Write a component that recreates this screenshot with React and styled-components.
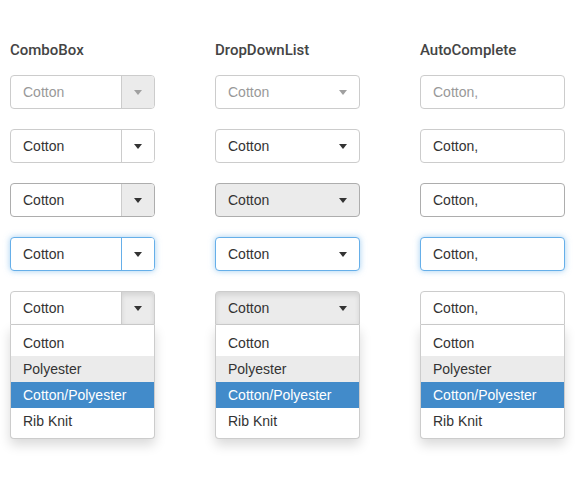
import React from 'react';
import styled, { createGlobalStyle, css } from 'styled-components';

const GlobalStyle = createGlobalStyle`
    body {
        margin: 0;
        background: #fff;
        font-family: "Liberation Sans", Arial, sans-serif;
    }
`

const items = ['Cotton', 'Polyester', 'Cotton/Polyester', 'Rib Knit'];
const states = ['disabled', 'default', 'hover', 'focus', 'open'];

const Arrow = ({ muted }) => (
    <svg width="8" height="5" viewBox="0 0 8 5">
        <path d="M0 0 L8 0 L4 5 Z" fill={muted ? '#a0a0a0' : '#333'} />
    </svg>
);

const Popup = () => (
    <List>
        {items.map((item, i) => (
            <Item key={item} $kind={i === 1 ? 'hover' : i === 2 ? 'selected' : null}>{item}</Item>
        ))}
    </List>
);

const ComboBox = ({ state }) => (
    <Holder>
        <Field $state={state}>
            <Value $muted={state === 'disabled'}>Cotton</Value>
            <Button $state={state}><Arrow muted={state === 'disabled'} /></Button>
        </Field>
        {state === 'open' && <Popup />}
    </Holder>
);

const DropDownList = ({ state }) => (
    <Holder>
        <Field $state={state} $filled={state === 'hover' || state === 'open'}>
            <Value $muted={state === 'disabled'}>Cotton</Value>
            <Select><Arrow muted={state === 'disabled'} /></Select>
        </Field>
        {state === 'open' && <Popup />}
    </Holder>
);

const AutoComplete = ({ state }) => (
    <Holder>
        <Field $state={state}>
            <Value $muted={state === 'disabled'}>Cotton,</Value>
        </Field>
        {state === 'open' && <Popup />}
    </Holder>
);

const columns = [
    { title: 'ComboBox', Widget: ComboBox },
    { title: 'DropDownList', Widget: DropDownList },
    { title: 'AutoComplete', Widget: AutoComplete },
];

export default function App() {
    return (
        <>
            <GlobalStyle />
            <Page>
                {columns.map(({ title, Widget }) => (
                    <Column key={title}>
                        <Title>{title}</Title>
                        {states.map(s => <Widget key={s} state={s} />)}
                    </Column>
                ))}
            </Page>
        </>
    );
}

const Page = styled.div`
    display: grid;
    grid-template-columns: repeat(3, 145px);
    column-gap: 60px;
    padding: 40px 10px 60px;
`

const Column = styled.div`
    display: flex;
    flex-direction: column;
    gap: 20px;
`

const Title = styled.h3`
    margin: 0 0 -5px;
    font-family: Roboto, "Liberation Sans", sans-serif;
    font-weight: 500;
    font-size: 15px;
    line-height: 20px;
    color: #444;
`

const Holder = styled.div`
    display: flex;
    flex-direction: column;
`

const Field = styled.div`
    box-sizing: border-box;
    height: 34px;
    display: flex;
    align-items: stretch;
    border: 1px solid #ccc;
    border-radius: 4px;
    background: ${p => p.$filled ? '#ebebeb' : '#fff'};
    overflow: hidden;
    ${p => p.$state === 'hover' && css`
        border-color: #adadad;
    `}
    ${p => p.$state === 'focus' && css`
        border-color: #66afe9;
        box-shadow: 0 0 6px rgba(102, 175, 233, 0.6);
    `}
    ${p => p.$state === 'open' && css`
        border-radius: 4px 4px 0 0;
        ${p.$filled && 'box-shadow: inset 0 3px 5px rgba(0, 0, 0, 0.1);'}
    `}
`

const Value = styled.div`
    flex: 1;
    display: flex;
    align-items: center;
    padding: 0 12px;
    font-size: 14px;
    color: ${p => p.$muted ? '#999' : '#333'};
`

const Button = styled.div`
    width: 32px;
    display: flex;
    align-items: center;
    justify-content: center;
    border-left: 1px solid ${p => p.$state === 'focus' ? '#66afe9' : '#ccc'};
    background: ${p => (p.$state === 'disabled' || p.$state === 'hover' || p.$state === 'open') ? '#ebebeb' : '#fff'};
    ${p => p.$state === 'open' && 'box-shadow: inset 0 3px 5px rgba(0, 0, 0, 0.1);'}
`

const Select = styled.div`
    width: 32px;
    display: flex;
    align-items: center;
    justify-content: center;
`

const List = styled.ul`
    margin: 0;
    padding: 5px 0 4px;
    list-style: none;
    background: #fff;
    border: 1px solid #ccc;
    border-top: none;
    border-radius: 0 0 4px 4px;
    box-shadow: 0 6px 12px rgba(0, 0, 0, 0.15);
`

const Item = styled.li`
    height: 26px;
    line-height: 26px;
    padding: 0 12px;
    font-size: 14px;
    color: ${p => p.$kind === 'selected' ? '#fff' : '#333'};
    background: ${p => p.$kind === 'selected' ? '#428bca' : p.$kind === 'hover' ? '#ebebeb' : 'transparent'};
`
